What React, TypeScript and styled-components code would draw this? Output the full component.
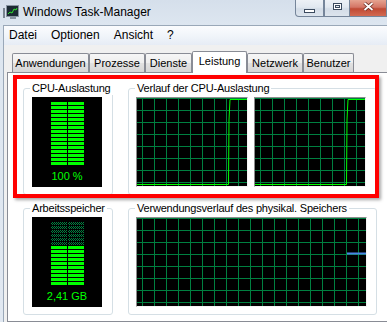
import React from "react";
import styled, { createGlobalStyle } from "styled-components";

const GlobalStyle = createGlobalStyle`
  html, body {
    margin: 0;
    padding: 0;
  }
  body {
    width: 387px;
    height: 322px;
    overflow: hidden;
    font-family: "Liberation Sans", Arial, sans-serif;
    background: #d9e3ee;
  }
`;

const gridGreen = "#008040";
const meterGreen = "#00ff00";

const Window = styled.div`
  display: flex;
  flex-direction: column;
  width: 387px;
  height: 322px;
  overflow: hidden;
  background: linear-gradient(#d5dfeb, #dde6f0 25px, #e1e8f1);
`;

const TitleBar = styled.div`
  display: flex;
  align-items: flex-start;
  height: 25px;
  flex: none;
`;

const IconSvg = styled.svg`
  flex: none;
  margin: 5px 0 0 3px;
`;

const Title = styled.div`
  flex: 1;
  margin-left: 4px;
  padding-top: 5px;
  font-size: 12px;
  line-height: 14px;
  color: #000;
`;

const CaptionButtons = styled.div`
  display: flex;
  flex: none;
  margin-left: auto;
`;

const CaptionButton = styled.div<{ $width: number; $close?: boolean }>`
  width: ${(p) => p.$width}px;
  height: 17px;
  box-sizing: border-box;
  display: flex;
  align-items: center;
  justify-content: center;
  border: 1px solid #75859a;
  border-top: none;
  border-left: ${(p) => (p.$close ? "none" : "1px solid #75859a")};
  background: ${(p) =>
    p.$close
      ? "linear-gradient(#e5a390, #d47565 45%, #c04a34 55%, #d26a52)"
      : "linear-gradient(#edf1f6, #e1e8f0 45%, #d3dce7 55%, #dce4ed)"};
  &:first-child {
    border-bottom-left-radius: 4px;
  }
`;

const MinGlyph = styled.div`
  width: 9px;
  height: 2px;
  margin-top: 5px;
  background: #fff;
  border: 1px solid #3b4a5e;
`;

const MaxGlyph = styled.div`
  width: 9px;
  height: 7px;
  box-sizing: border-box;
  border: 1px solid #3b4a5e;
  background: #e8edf3;
  box-shadow: inset 0 0 0 1px #fff, inset 0 0 0 2px #3b4a5e;
  margin-bottom: 4px;
`;

const Client = styled.div`
  flex: 1;
  min-height: 0;
  display: flex;
  flex-direction: column;
  margin-left: 3px;
  background: #f0f0f0;
  border-top: 1px solid #9aa8b8;
  border-left: 1px solid #9aa8b8;
`;

const MenuBar = styled.div`
  flex: none;
  display: flex;
  align-items: center;
  height: 19px;
  padding-left: 5px;
  background: linear-gradient(#fbfcfe, #f1f5fa 50%, #e6ecf5);
`;

const MenuItem = styled.span`
  margin-right: 14px;
  font-size: 12px;
  line-height: 19px;
  color: #000;
`;

const TabArea = styled.div`
  flex: 1;
  min-height: 0;
  display: flex;
  flex-direction: column;
  padding: 6px 0 0 3px;
`;

const TabStrip = styled.div`
  flex: none;
  display: flex;
  align-items: flex-end;
  height: 21px;
  padding-left: 5px;
  position: relative;
  z-index: 1;
`;

const Tab = styled.div<{ $width: number; $active?: boolean }>`
  width: ${(p) => p.$width}px;
  height: ${(p) => (p.$active ? 22 : 19)}px;
  margin-bottom: ${(p) => (p.$active ? -1 : 0)}px;
  box-sizing: border-box;
  border: 1px solid #898c95;
  border-bottom: none;
  border-radius: 2px 2px 0 0;
  background: ${(p) =>
    p.$active ? "#fff" : "linear-gradient(#f6f6f6, #eeeeee 50%, #e2e2e2 50%, #d6d6d6)"};
  font-size: 11px;
  line-height: 18px;
  text-align: center;
  color: #000;
  white-space: nowrap;
`;

const Panel = styled.div`
  flex: 1;
  width: 400px;
  position: relative;
  display: grid;
  grid-template-columns: 90px 249px;
  grid-auto-rows: 107px;
  column-gap: 15px;
  row-gap: 13px;
  align-content: start;
  padding: 15px 0 0 15px;
  border: 1px solid #898c95;
  background: #fff;
`;

const GroupBox = styled.div`
  box-sizing: border-box;
  border: 1px solid #d5dfe5;
  border-radius: 3px;
`;

const Caption = styled.div`
  width: fit-content;
  margin: -7px 0 0 6px;
  padding: 0 2px;
  background: #fff;
  font-size: 11px;
  line-height: 13px;
  letter-spacing: -0.2px;
  color: #000;
  white-space: nowrap;
`;

const GroupBody = styled.div<{ $indent: number }>`
  display: flex;
  gap: 6px;
  padding: 2px 0 0 ${(p) => p.$indent}px;
`;

const Meter = styled.div`
  width: 70px;
  height: 90px;
  box-sizing: border-box;
  padding-top: 5px;
  display: flex;
  flex-direction: column;
  align-items: center;
  background: #000;
`;

const BarPair = styled.div`
  display: flex;
  gap: 1px;
`;

const BarColumn = styled.div`
  display: flex;
  flex-direction: column;
  gap: 1px;
  width: 16px;
`;

const Segment = styled.div<{ $lit: boolean }>`
  height: 3px;
  background: ${(p) =>
    p.$lit
      ? meterGreen
      : `repeating-conic-gradient(${gridGreen} 0 25%, #000 0 50%) 0 0 / 2px 2px`};
`;

const MeterText = styled.div`
  margin-top: 5px;
  font-size: 11px;
  line-height: 13px;
  color: ${meterGreen};
  white-space: nowrap;
`;

const GraphFrame = styled.div<{ $width: number }>`
  width: ${(p) => p.$width}px;
  height: 90px;
  box-sizing: border-box;
  border-top: 1px solid #8c8c8c;
  border-left: 1px solid #8c8c8c;
  border-right: 1px solid #f4f4f4;
  border-bottom: 1px solid #f4f4f4;
  background: #000;
  svg {
    display: block;
  }
`;

const RedFrame = styled.div`
  position: absolute;
  left: 5px;
  top: 2px;
  width: 366px;
  height: 123px;
  box-sizing: border-box;
  border: 4px solid #ff0000;
  box-shadow: 2px 2px 3px rgba(0, 0, 0, 0.35);
  pointer-events: none;
`;

const SEGMENTS = 16;

const UsageMeter = ({ value, text }: { value: number; text: string }) => {
  const litCount = Math.round(SEGMENTS * value);
  const rows = Array.from({ length: SEGMENTS }, (_, i) => i >= SEGMENTS - litCount);
  const column = (
    <BarColumn>
      {rows.map((lit, i) => (
        <Segment key={i} $lit={lit} />
      ))}
    </BarColumn>
  );
  return (
    <Meter>
      <BarPair>
        {column}
        {column}
      </BarPair>
      <MeterText>{text}</MeterText>
    </Meter>
  );
};

const Graph = ({
  width,
  points,
  color,
  stroke = 1,
}: {
  width: number;
  points: string;
  color: string;
  stroke?: number;
}) => {
  const w = width - 2;
  const h = 88;
  const xs: number[] = [];
  for (let x = 5.5; x < w; x += 12) xs.push(x);
  const ys: number[] = [];
  for (let y = 0.5; y < h; y += 12) ys.push(y);
  return (
    <GraphFrame $width={width}>
      <svg width={w} height={h}>
        {xs.map((x) => (
          <line key={"v" + x} x1={x} y1={0} x2={x} y2={h} stroke={gridGreen} />
        ))}
        {ys.map((y) => (
          <line key={"h" + y} x1={0} y1={y} x2={w} y2={y} stroke={gridGreen} />
        ))}
        <polyline points={points} fill="none" stroke={color} strokeWidth={stroke} />
      </svg>
    </GraphFrame>
  );
};

const AppIcon = () => (
  <IconSvg width="16" height="14" viewBox="0 0 16 14">
    <rect x="0" y="3" width="2" height="10" fill="#7a8591" />
    <rect x="3.5" y="0.5" width="12" height="11" fill="#1c2a33" stroke="#8a96a3" />
    <polyline points="5,9 7,7 9,8 11,4 13,5 14,3" fill="none" stroke="#2ee82e" strokeWidth="1" />
    <rect x="7" y="12" width="6" height="2" fill="#8a96a3" />
  </IconSvg>
);

const CloseGlyph = () => (
  <svg width="11" height="9" viewBox="0 0 11 9" style={{ marginBottom: 3 }}>
    <path d="M1.5 1 L9.5 8 M9.5 1 L1.5 8" stroke="#6a2a20" strokeWidth="3.4" />
    <path d="M1.5 1 L9.5 8 M9.5 1 L1.5 8" stroke="#fff" strokeWidth="1.8" />
  </svg>
);

const tabs = [
  { label: "Anwendungen", width: 77 },
  { label: "Prozesse", width: 56 },
  { label: "Dienste", width: 47 },
  { label: "Leistung", width: 55, active: true },
  { label: "Netzwerk", width: 56 },
  { label: "Benutzer", width: 51 },
];

export default function App() {
  return (
    <>
      <GlobalStyle />
      <Window>
        <TitleBar>
          <AppIcon />
          <Title>Windows Task-Manager</Title>
          <CaptionButtons>
            <CaptionButton $width={29}>
              <MinGlyph />
            </CaptionButton>
            <CaptionButton $width={26}>
              <MaxGlyph />
            </CaptionButton>
            <CaptionButton $width={37} $close>
              <CloseGlyph />
            </CaptionButton>
          </CaptionButtons>
        </TitleBar>
        <Client>
          <MenuBar>
            <MenuItem>Datei</MenuItem>
            <MenuItem>Optionen</MenuItem>
            <MenuItem>Ansicht</MenuItem>
            <MenuItem>?</MenuItem>
          </MenuBar>
          <TabArea>
            <TabStrip>
              {tabs.map((t) => (
                <Tab key={t.label} $width={t.width} $active={t.active}>
                  {t.label}
                </Tab>
              ))}
            </TabStrip>
            <Panel>
              <GroupBox>
                <Caption>CPU-Auslastung</Caption>
                <GroupBody $indent={8}>
                  <UsageMeter value={1} text="100 %" />
                </GroupBody>
              </GroupBox>
              <GroupBox>
                <Caption>Verlauf der CPU-Auslastung</Caption>
                <GroupBody $indent={7}>
                  <Graph
                    width={112}
                    color={meterGreen}
                    points="0,86.5 91.5,86.5 92,22 93,1.5 110,1.5"
                  />
                  <Graph
                    width={112}
                    color={meterGreen}
                    points="0,86.5 91.5,86.5 92,22 93,1.5 110,1.5"
                  />
                </GroupBody>
              </GroupBox>
              <GroupBox>
                <Caption>Arbeitsspeicher</Caption>
                <GroupBody $indent={8}>
                  <UsageMeter value={0.62} text="2,41 GB" />
                </GroupBody>
              </GroupBox>
              <GroupBox>
                <Caption>Verwendungsverlauf des physikal. Speichers</Caption>
                <GroupBody $indent={7}>
                  <Graph width={231} color="#4a84e6" stroke={2} points="210,35.5 229,35.5" />
                </GroupBody>
              </GroupBox>
              <RedFrame />
            </Panel>
          </TabArea>
        </Client>
      </Window>
    </>
  );
}
